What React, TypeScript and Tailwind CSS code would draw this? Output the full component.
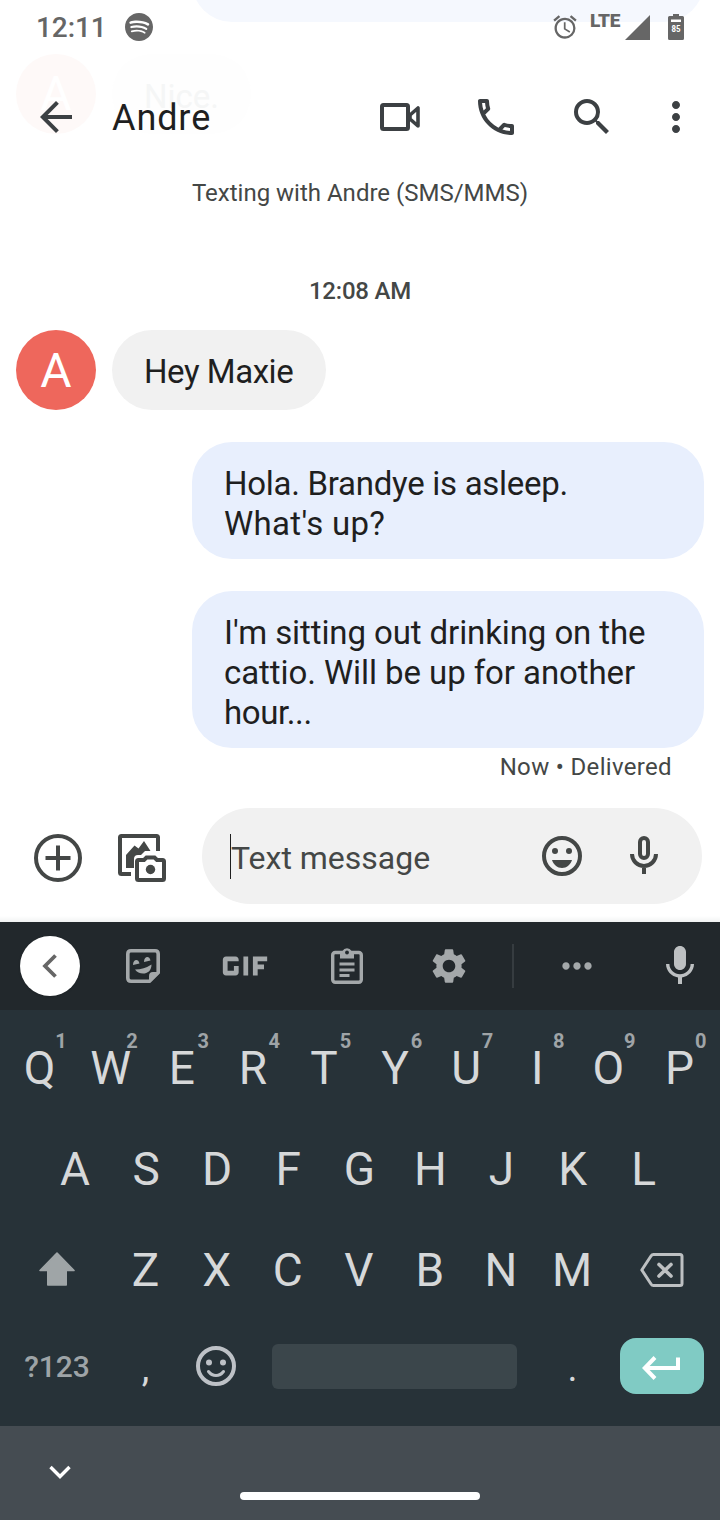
import type { ReactNode } from "react";
import {
  MdAlarm,
  MdArrowBack,
  MdGif,
  MdMic,
  MdMoreHoriz,
  MdMoreVert,
  MdOutlineCall,
  MdSearch,
  MdSettings,
} from "react-icons/md";
import { SiSpotify } from "react-icons/si";

const topKeys = ["Q", "W", "E", "R", "T", "Y", "U", "I", "O", "P"];
const homeKeys = ["A", "S", "D", "F", "G", "H", "J", "K", "L"];
const bottomKeys = ["Z", "X", "C", "V", "B", "N", "M"];

/* Older messages, faintly visible through the translucent app bar */
function ScrolledMessages() {
  return (
    <div className="absolute inset-x-0 top-0 h-[140px] overflow-hidden">
      <div className="absolute -top-20 left-48 h-[102px] w-[512px] rounded-[40px] bg-[#f5f8fe]" />
      <div className="absolute left-4 top-[54px] flex size-20 items-center justify-center rounded-full bg-[#fef9f8] text-[48px] leading-none text-white">
        A
      </div>
      <div className="absolute left-28 top-[54px] flex h-20 items-center rounded-full bg-[#fefefe] px-8 pt-1.5 text-[33px] text-[#f5f6f6]">
        Nice.
      </div>
    </div>
  );
}

function StatusBar() {
  return (
    <div className="relative flex h-[54px] items-center text-[#666]">
      <span className="ml-9 w-[89px] pt-0.5 text-[28px] font-medium leading-8 tracking-[-0.1px]">12:11</span>
      <SiSpotify className="size-7" />
      <div className="flex-1" />
      <MdAlarm className="mr-[11px] size-7" />
      <span className="mr-1 -mt-3 w-[31px] text-[19px] font-black leading-5 tracking-[-0.3px]">LTE</span>
      <svg className="size-[25px]" viewBox="0 0 25 25" fill="currentColor">
        <path d="M25 0v25H0z" />
      </svg>
      <svg className="ml-[18px] mr-9 h-[26px] w-4" viewBox="0 0 16 26">
        <path d="M5 0h6v2h3.500q1.500 0 1.500 1.500v21q0 1.500-1.500 1.500h-13Q0 26 0 24.500v-21Q0 2 1.500 2H5z" fill="currentColor" />
        <path d="M3 5.500h10v2.500H3z" fill="#fff" />
        <text x="3.500" y="18" fontSize="9" fontWeight="700" fill="#fff" textLength="9" lengthAdjust="spacingAndGlyphs">85</text>
      </svg>
    </div>
  );
}

function AppBar() {
  return (
    <div className="relative flex h-[126px] items-center text-[#3c4043]">
      <MdArrowBack className="ml-8 size-12" />
      <h1 className="ml-8 flex-1 pt-px text-[36px] font-normal leading-none tracking-[0.9px] text-[#1f1f1f]">Andre</h1>
      <svg className="mr-12 h-12 w-12" viewBox="0 0 48 48" fill="none" stroke="currentColor" strokeWidth="4" strokeLinejoin="round">
        <rect x="6" y="12" width="26" height="24" rx="1.500" />
        <path d="M42 15v18l-8-7v-4z" strokeWidth="3.600" />
      </svg>
      <MdOutlineCall className="mr-12 size-12" />
      <MdSearch className="mr-9 size-12" />
      <MdMoreVert className="mr-5 size-12" />
    </div>
  );
}

function Sent({ children }: { children: ReactNode }) {
  return (
    <div className="ml-48 w-[512px] rounded-[40px] bg-[#e8effd] px-8 pb-[15px] pt-[22px] text-[33px] leading-10 text-[#1f1f1f]">
      {children}
    </div>
  );
}

function Conversation() {
  return (
    <div className="h-[628px]">
      <p className="text-center text-[24px] leading-[26px] text-[#444746]">Texting with Andre (SMS/MMS)</p>
      <p className="pt-[72px] text-center text-[24px] font-medium leading-[26px] tracking-[-0.2px] text-[#444746]">12:08 AM</p>
      <div className="flex gap-4 pl-4 pt-[26px]">
        <div className="flex size-20 items-center justify-center rounded-full bg-[#ee675c] pt-0.5 text-[48px] leading-none text-white">A</div>
        <div className="h-20 w-[214px] whitespace-nowrap rounded-full bg-[#f1f1f1] pl-8 pt-[22px] text-[33px] leading-10 tracking-[-0.45px] text-[#1f1f1f]">
          Hey Maxie
        </div>
      </div>
      <div className="flex flex-col gap-8 pt-8">
        <Sent>
          <div className="tracking-[-0.28px]">Hola. Brandye is asleep.</div>
          <div className="tracking-[0.3px]">What's up?</div>
        </Sent>
        <Sent>
          <div className="tracking-[-0.1px]">I'm sitting out drinking on the</div>
          <div className="tracking-[-0.08px]">cattio. Will be up for another</div>
          <div className="tracking-[-0.4px]">hour...</div>
        </Sent>
      </div>
      <p className="pr-12 pt-1.5 text-right text-[24px] leading-[26px] tracking-[0.33px] text-[#444746]">Now • Delivered</p>
    </div>
  );
}

function Composer() {
  return (
    <div className="relative flex h-[114px] items-start text-[#444746]">
      <svg className="ml-[34px] mt-[26px] size-12" viewBox="0 0 48 48" fill="none" stroke="currentColor" strokeWidth="4">
        <circle cx="24" cy="24" r="22" />
        <path d="M24 11.500v25M11.500 24h25" />
      </svg>
      <svg className="ml-9 mt-[26px] size-12" viewBox="0 0 48 48" fill="none" stroke="currentColor" strokeWidth="4">
        <path d="M13 40H3.500Q2 40 2 38.500v-35Q2 2 3.500 2h35Q40 2 40 3.500V17" />
        <path d="M8 34V21l8.500-9.500 4 3L26 7l6.500 10H27l-4 4h-3q-4 0-4 4v9z" fill="currentColor" stroke="none" />
        <path d="M20.500 26H26l2.500-2.500h8L39 26h5.500q1.500 0 1.500 1.500v17q0 1.500-1.500 1.500h-24Q19 46 19 44.500v-17Q19 26 20.500 26z" />
        <circle cx="32.500" cy="35.500" r="4.700" fill="currentColor" stroke="none" />
      </svg>
      <div className="ml-9 flex h-24 w-[500px] items-center rounded-full bg-[#f1f1f1] pl-7">
        <div className="h-[45px] w-px bg-[#1f1f1f]" />
        <span className="flex-1 pt-1 text-[32px] leading-10">Text message</span>
        <svg className="mr-[34px] size-12" viewBox="0 0 48 48" fill="currentColor">
          <circle cx="24" cy="24" r="18" fill="none" stroke="currentColor" strokeWidth="4" />
          <circle cx="17" cy="19" r="3" />
          <circle cx="31" cy="19" r="3" />
          <path d="M14 28h20c-1.500 4.700-5.300 8-10 8s-8.500-3.300-10-8z" />
        </svg>
        <svg className="mr-[34px] size-12" viewBox="0 0 48 48" fill="none" stroke="currentColor" strokeWidth="4">
          <rect x="20" y="6" width="8" height="20" rx="4" />
          <path d="M12 22c0 6.600 5.400 12 12 12s12-5.400 12-12M24 34v8" />
        </svg>
      </div>
      <div className="absolute inset-x-0 bottom-0 h-1.5 bg-linear-to-b from-white to-[#f1f3f3]" />
    </div>
  );
}

function KeyboardToolbar() {
  return (
    <div className="flex h-22 items-center bg-[#22282c] text-[#a4a8aa]">
      <div className="ml-5 flex size-[60px] items-center justify-center rounded-full bg-white text-[#666] shadow">
        <svg className="size-6" viewBox="0 0 24 24" fill="none" stroke="currentColor" strokeWidth="3.800">
          <path d="M17.500 1.500 7 12l10.500 10.500" />
        </svg>
      </div>
      <svg className="ml-[46px] size-[34px]" viewBox="0 0 34 34" fill="none" stroke="currentColor" strokeWidth="3.600" strokeLinejoin="round">
        <path d="M5 1.800h24q3.200 0 3.200 3.200v18.500l-8.700 8.700H5q-3.200 0-3.200-3.200V5q0-3.200 3.200-3.200z" />
        <path d="M24 32v-5q0-3 3-3h5.500z" fill="currentColor" strokeWidth="2" />
        <path d="M9 20.500q9 0 16.500-5c0 11-12.500 11-16.500 5z" fill="currentColor" stroke="none" />
        <path d="M7 16c0-6 5.500-6.500 6.500-1.500zM18 13c0-6 5.500-6.500 6.500-1.500z" fill="currentColor" stroke="none" />
      </svg>
      <MdGif className="ml-[47px] size-[76px]" />
      <svg className="ml-12 mr-[5px] -mt-px h-[37px] w-8" viewBox="0 0 32 37" fill="none" stroke="currentColor" strokeWidth="3.400">
        <rect x="1.700" y="5.500" width="28.600" height="29.700" rx="2.500" />
        <path d="M9 4h2.500a5 5 0 0 1 9 0H23v7.500H9z" fill="currentColor" stroke="none" />
        <circle cx="16" cy="5.500" r="1.900" fill="#22282c" stroke="none" />
        <path d="M8.500 17h15M8.500 23h15M8.500 28.500h10" strokeWidth="3" />
      </svg>
      <MdSettings className="ml-[60px] size-[42px]" />
      <div className="ml-[42px] h-11 w-0.5 bg-[#363c40]" />
      <MdMoreHoriz className="ml-[41px] size-11" />
      <MdMic className="ml-[57px] size-12 text-[#bdc0c2]" />
    </div>
  );
}

function Key({ label, hint }: { label: string; hint?: string }) {
  return (
    <div className="relative flex h-full w-[71.1px] items-center justify-center pb-0.5 text-[46px] leading-none text-[#d6d8d9]">
      {label}
      {hint && (
        <span className="absolute left-[50px] top-[13px] w-[14px] text-center text-[20px] font-bold leading-5 text-[#9fa4a7]">
          {hint}
        </span>
      )}
    </div>
  );
}

function Keyboard() {
  return (
    <div className="h-[416px] bg-[#273238] pt-2">
      <div className="flex h-[101px] pl-1">
        {topKeys.map((k, i) => (
          <Key key={k} label={k} hint={String((i + 1) % 10)} />
        ))}
      </div>
      <div className="flex h-[101px] pl-[39.4px]">
        {homeKeys.map((k) => (
          <Key key={k} label={k} />
        ))}
      </div>
      <div className="flex h-[101px] items-center pl-1">
        <div className="flex w-[106px] justify-center pb-1">
          <svg className="h-[34px] w-9" viewBox="0 0 36 34" fill="#9fa5a7" stroke="#9fa5a7" strokeWidth="1.600" strokeLinejoin="round">
            <path d="M18 1 35 18.500H27.200V33H8.800V18.500H1z" />
          </svg>
        </div>
        {bottomKeys.map((k) => (
          <Key key={k} label={k} />
        ))}
        <div className="flex w-[108px] justify-center pb-0.5">
          <svg className="h-[34px] w-11" viewBox="0 0 44 34" fill="none" stroke="#bdc0c2" strokeWidth="3" strokeLinejoin="round">
            <path d="M13.500 1.500H40q2 0 2 2v27q0 2-2 2H13.500q-1.500 0-2.500-1.500L1.800 17 11 3q1-1.500 2.500-1.500z" />
            <path d="m19 11.500 12 11.500M31 11.500 19 23" strokeWidth="3.600" strokeLinecap="round" />
          </svg>
        </div>
      </div>
      <div className="flex h-[90px] items-center pl-1">
        <div className="w-[106px] pt-0.5 text-center text-[30px] font-medium leading-none text-[#9ea4a7]">?123</div>
        <div className="w-[71px] pt-1 text-center text-[38px] leading-none text-[#d6d8d9]">,</div>
        <div className="flex w-[69px] justify-center">
          <svg className="size-10" viewBox="0 0 40 40" fill="#bdc1c6">
            <circle cx="20" cy="20" r="18" fill="none" stroke="#bdc1c6" strokeWidth="4" />
            <circle cx="13" cy="16.500" r="3" />
            <circle cx="27" cy="16.500" r="3" />
            <path d="M12.500 25.500q3 4 7.500 4t7.500-4" fill="none" stroke="#bdc1c6" strokeWidth="3" strokeLinecap="round" />
          </svg>
        </div>
        <div className="ml-[22px] h-[45px] w-[245px] rounded-md bg-[#3b464b]" />
        <div className="ml-5 w-[71px] pt-1 text-center text-[38px] leading-none text-[#d6d8d9]">.</div>
        <div className="ml-3 flex h-14 w-[84px] items-center justify-center rounded-2xl bg-[#80cbc4] pr-0.5">
          <svg className="mt-1 h-6 w-[38px]" viewBox="0 0 38 24" fill="none" stroke="#fff" strokeWidth="4">
            <path d="M36 1.500V12H4M13 1.500 2.800 12 13 22.500" />
          </svg>
        </div>
      </div>
    </div>
  );
}

function NavigationBar() {
  return (
    <div className="relative h-[94px] bg-[#454c52]">
      <svg className="ml-[49px] h-[53px] w-[22px] pt-[39px]" viewBox="0 0 22 14" fill="none" stroke="#fff" strokeWidth="3.400">
        <path d="m1.500 2 9.500 9.500L20.500 2" />
      </svg>
      <div className="mx-auto mt-[13px] h-2 w-60 rounded-full bg-white" />
    </div>
  );
}

export default function App() {
  return (
    <div className="relative h-[1520px] w-[720px] overflow-hidden bg-white font-[Roboto,sans-serif]">
      <ScrolledMessages />
      <StatusBar />
      <AppBar />
      <Conversation />
      <Composer />
      <KeyboardToolbar />
      <Keyboard />
      <NavigationBar />
    </div>
  );
}
